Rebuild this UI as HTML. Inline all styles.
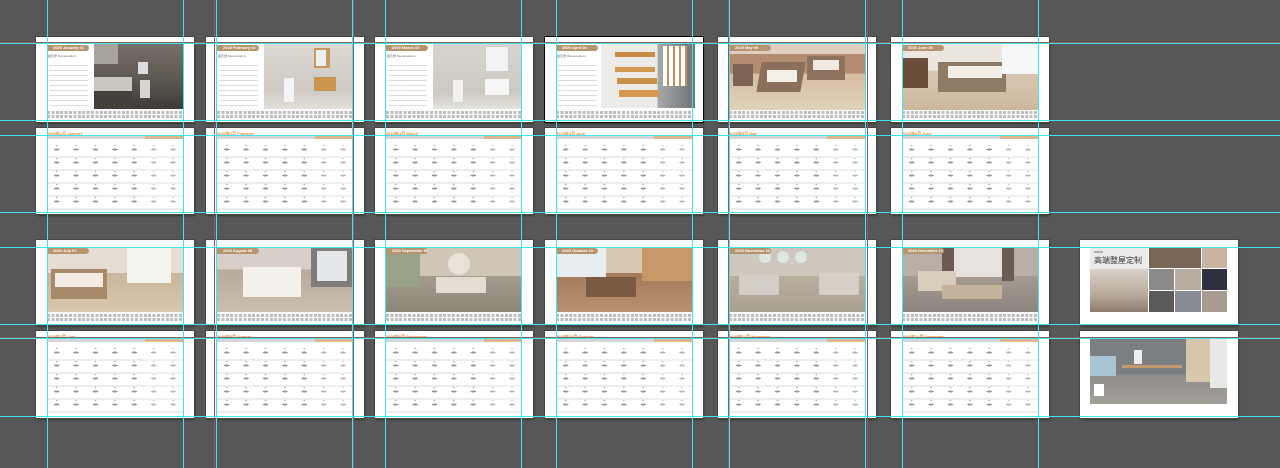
<!DOCTYPE html>
<html><head><meta charset="utf-8"><style>
*{margin:0;padding:0;box-sizing:border-box}
html,body{width:1280px;height:468px;overflow:hidden;background:#575757;font-family:"Liberation Sans","Noto Sans CJK SC",sans-serif}
.card{position:absolute;background:#fff;width:158px;box-shadow:0 0 0 1px #444,1px 2px 2px rgba(0,0,0,.35)}
.ab{position:absolute}
.pill{position:absolute;left:11px;top:8px;width:42px;height:6px;background:#b8946e;border-radius:0 3px 3px 0;color:#fff;font-size:4px;line-height:6px;padding-left:6px;font-weight:bold;white-space:nowrap}
.strip{position:absolute;left:11px;top:74px;width:136px;height:7px;background:repeating-linear-gradient(90deg,#a8a8a8 0 3px,#fff 3px 4.4px);opacity:.75}
.strip:after{content:"";position:absolute;left:0;top:3px;width:100%;height:1px;background:#fff}
.lines{position:absolute;left:13px;top:24px;width:39px;height:46px;background:repeating-linear-gradient(180deg,#fff 0 4px,#ddd 4px 5px)}
.memo{position:absolute;left:12px;top:17px;font-size:3px;color:#666;white-space:nowrap}
.ctitle{position:absolute;left:11px;top:3px;font-size:4px;color:#e08a3a;white-space:nowrap;font-weight:bold}
.chead{position:absolute;left:11px;top:8px;width:136px;height:3px;background:linear-gradient(90deg,#d4d6d8 0 72%,#dbb68e 72%)}
.crows{position:absolute;left:11px;top:17px;width:136px;height:68px;background:repeating-linear-gradient(180deg,transparent 0 11px,#ececec 11px 13px)}
.cells{position:absolute;left:11px;top:14px;width:136px;height:65px;
background-image:radial-gradient(ellipse 1px 0.8px,#aaa 90%,transparent 100%),radial-gradient(ellipse 3px 1px,#999 90%,transparent 100%);
background-size:19.4px 13px,19.4px 13px;background-position:0 -3px,0 1px}
.cells:after{content:"";position:absolute;left:97px;top:0;width:39px;height:100%;background:rgba(255,200,140,.35);mix-blend-mode:screen}
.photo{position:absolute}
.vg{position:absolute;top:0;width:1px;height:468px;background:#3fe4ec}
.hg{position:absolute;left:0;height:1px;width:1280px;background:#3fe4ec}
.vp{position:absolute;top:0;width:1px;height:468px;background:#8a5e5e}
.hp{position:absolute;left:0;height:1px;width:1280px;background:#8a5e5e}
</style></head><body>

<!-- ROW 1 -->
<div class="card" style="left:36px;top:37px;height:85px">
 <div class="pill">2020 January 01</div><div class="memo">备忘录 Memorandum</div><div class="lines"></div>
 <div class="photo" style="left:58px;top:7px;width:89px;height:65px;background:linear-gradient(180deg,#777068 0%,#5c5750 55%,#3e3b38 100%)">
  <div class="ab" style="left:0;top:33px;width:38px;height:14px;background:#c9c5bf"></div>
  <div class="ab" style="left:0;top:0;width:24px;height:20px;background:#a8a39b"></div>
  <div class="ab" style="left:44px;top:18px;width:10px;height:12px;background:#ddd"></div>
  <div class="ab" style="left:46px;top:36px;width:10px;height:18px;background:#d8d5d0"></div>
  <div class="ab" style="left:0;top:47px;width:38px;height:18px;background:#44403c"></div>
 </div>
 <div class="strip"></div>
</div>
<div class="card" style="left:206px;top:37px;height:85px">
 <div class="pill">2020 February 02</div><div class="memo">备忘录 Memorandum</div><div class="lines"></div>
 <div class="photo" style="left:58px;top:7px;width:89px;height:65px;background:linear-gradient(180deg,#dcd8d2,#cfcac3 70%,#e2dfdb)">
  <div class="ab" style="left:50px;top:4px;width:16px;height:20px;background:#c49a62"></div>
  <div class="ab" style="left:52px;top:6px;width:10px;height:16px;background:#eceff0"></div>
  <div class="ab" style="left:50px;top:33px;width:22px;height:14px;background:#c9954e"></div>
  <div class="ab" style="left:20px;top:34px;width:10px;height:24px;background:#f4f4f4"></div>
 </div>
 <div class="strip"></div>
</div>
<div class="card" style="left:375px;top:37px;height:85px">
 <div class="pill">2020 March 03</div><div class="memo">备忘录 Memorandum</div><div class="lines"></div>
 <div class="photo" style="left:58px;top:7px;width:89px;height:65px;background:linear-gradient(180deg,#d8d3cd,#cec9c2 75%,#e4e2df)">
  <div class="ab" style="left:52px;top:2px;width:24px;height:26px;background:#f3f3f3;border:1px solid #ccc"></div>
  <div class="ab" style="left:52px;top:35px;width:24px;height:16px;background:#f6f6f6"></div>
  <div class="ab" style="left:20px;top:36px;width:10px;height:22px;background:#f2f2f2"></div>
 </div>
 <div class="strip"></div>
</div>
<div class="card" style="left:545px;top:37px;height:85px;box-shadow:0 0 0 1px #000,1px 2px 2px rgba(0,0,0,.4)">
 <div class="pill">2020 April 04</div><div class="memo">备忘录 Memorandum</div><div class="lines"></div>
 <div class="photo" style="left:56px;top:5px;width:94px;height:66px;background:linear-gradient(90deg,#ecebe8 0 60%,#a8a9ab 60%,#6f7276)">
  <div class="ab" style="left:14px;top:10px;width:40px;height:5px;background:#c88c44"></div>
  <div class="ab" style="left:14px;top:25px;width:40px;height:5px;background:#d09850"></div>
  <div class="ab" style="left:16px;top:36px;width:40px;height:6px;background:#c99048"></div>
  <div class="ab" style="left:18px;top:48px;width:40px;height:7px;background:#d39a50"></div>
  <div class="ab" style="left:62px;top:4px;width:24px;height:40px;background:repeating-linear-gradient(90deg,#fff 0 4px,#c09060 4px 6px)"></div>
 </div>
 <div class="strip"></div>
</div>
<div class="card" style="left:718px;top:37px;height:85px">
 <div class="photo" style="left:11px;top:7px;width:136px;height:66px;background:linear-gradient(180deg,#e0cfc0 0 15%,#b48d70 15% 45%,#d4bea2 45%,#e2d2bb)">
  <div class="ab" style="left:30px;top:18px;width:44px;height:30px;background:#8b6f5a;transform:skewX(-10deg)"></div>
  <div class="ab" style="left:38px;top:26px;width:30px;height:12px;background:#f4efe9"></div>
  <div class="ab" style="left:78px;top:12px;width:38px;height:24px;background:#8d7260"></div>
  <div class="ab" style="left:84px;top:16px;width:26px;height:10px;background:#f0eae2"></div>
  <div class="ab" style="left:4px;top:20px;width:20px;height:22px;background:#7c6454"></div>
 </div>
 <div class="pill">2020 May 05</div>
 <div class="strip"></div>
</div>
<div class="card" style="left:891px;top:37px;height:85px">
 <div class="photo" style="left:11px;top:7px;width:136px;height:66px;background:linear-gradient(180deg,#ece6e0 0 40%,#d8c8b4 40%,#cdb89c)">
  <div class="ab" style="left:0;top:14px;width:26px;height:30px;background:#6a4e3a"></div>
  <div class="ab" style="left:36px;top:18px;width:68px;height:30px;background:#8f7a66"></div>
  <div class="ab" style="left:46px;top:22px;width:54px;height:12px;background:#f3efe9"></div>
  <div class="ab" style="left:100px;top:0;width:36px;height:30px;background:#f6f7f8"></div>
 </div>
 <div class="pill">2020 June 06</div>
 <div class="strip"></div>
</div>

<!-- ROW 2 calendars -->
<div class="card" style="left:36px;top:128px;height:86px"><div class="ctitle">2020年1月 January</div><div class="chead"></div><div class="crows"></div><div class="cells"></div></div>
<div class="card" style="left:206px;top:128px;height:86px"><div class="ctitle">2020年2月 February</div><div class="chead"></div><div class="crows"></div><div class="cells"></div></div>
<div class="card" style="left:375px;top:128px;height:86px"><div class="ctitle">2020年3月 March</div><div class="chead"></div><div class="crows"></div><div class="cells"></div></div>
<div class="card" style="left:545px;top:128px;height:86px"><div class="ctitle">2020年4月 April</div><div class="chead"></div><div class="crows"></div><div class="cells"></div></div>
<div class="card" style="left:718px;top:128px;height:86px"><div class="ctitle">2020年5月 May</div><div class="chead"></div><div class="crows"></div><div class="cells"></div></div>
<div class="card" style="left:891px;top:128px;height:86px"><div class="ctitle">2020年6月 June</div><div class="chead"></div><div class="crows"></div><div class="cells"></div></div>

<!-- ROW 3 -->
<div class="card" style="left:36px;top:240px;height:85px">
 <div class="photo" style="left:11px;top:7px;width:136px;height:65px;background:linear-gradient(180deg,#e6ddd2 0 40%,#c9b69c 40%,#d8c7ae)">
  <div class="ab" style="left:4px;top:22px;width:56px;height:30px;background:#a88a6a"></div>
  <div class="ab" style="left:8px;top:26px;width:48px;height:14px;background:#f2ece4"></div>
  <div class="ab" style="left:80px;top:0;width:44px;height:36px;background:#f4f2ee"></div>
 </div>
 <div class="pill">2020 July 07</div><div class="strip"></div>
</div>
<div class="card" style="left:206px;top:240px;height:85px">
 <div class="photo" style="left:11px;top:7px;width:136px;height:65px;background:linear-gradient(180deg,#d8d0c8 0 35%,#b7aa9c 35%,#cbbfb2)">
  <div class="ab" style="left:26px;top:20px;width:58px;height:30px;background:#f4f1ed"></div>
  <div class="ab" style="left:94px;top:0;width:42px;height:40px;background:#7f7d7a"></div>
  <div class="ab" style="left:100px;top:4px;width:30px;height:30px;background:#e5e8ea"></div>
 </div>
 <div class="pill">2020 August 08</div><div class="strip"></div>
</div>
<div class="card" style="left:375px;top:240px;height:85px">
 <div class="photo" style="left:11px;top:7px;width:136px;height:65px;background:linear-gradient(180deg,#cfc6b8 0 45%,#a49c8e 45%,#8c8678)">
  <div class="ab" style="left:0;top:0;width:34px;height:40px;background:#9aa38a"></div>
  <div class="ab" style="left:50px;top:30px;width:50px;height:16px;background:#e4ddd2"></div>
  <div class="ab" style="left:62px;top:6px;width:22px;height:22px;border-radius:50%;background:#e8e2d8"></div>
 </div>
 <div class="pill">2020 September 09</div><div class="strip"></div>
</div>
<div class="card" style="left:545px;top:240px;height:85px">
 <div class="photo" style="left:11px;top:7px;width:136px;height:65px;background:linear-gradient(180deg,#d9c9b4 0 40%,#a47a58 40%,#b89272)">
  <div class="ab" style="left:0;top:0;width:50px;height:30px;background:#e8eef0"></div>
  <div class="ab" style="left:86px;top:0;width:50px;height:34px;background:#c89868"></div>
  <div class="ab" style="left:30px;top:30px;width:50px;height:20px;background:#7a5a42"></div>
 </div>
 <div class="pill">2020 October 10</div><div class="strip"></div>
</div>
<div class="card" style="left:718px;top:240px;height:85px">
 <div class="photo" style="left:11px;top:7px;width:136px;height:65px;background:linear-gradient(180deg,#cdc7bd 0 45%,#b8ae9e 45%,#a8a092)">
  <div class="ab" style="left:30px;top:4px;width:12px;height:12px;border-radius:50%;background:#dfe8e0"></div>
  <div class="ab" style="left:48px;top:4px;width:12px;height:12px;border-radius:50%;background:#dfe8e0"></div>
  <div class="ab" style="left:66px;top:4px;width:12px;height:12px;border-radius:50%;background:#dfe8e0"></div>
  <div class="ab" style="left:10px;top:28px;width:40px;height:20px;background:#d4cfc6"></div>
  <div class="ab" style="left:90px;top:26px;width:40px;height:22px;background:#d6d0c6"></div>
 </div>
 <div class="pill">2020 November 11</div><div class="strip"></div>
</div>
<div class="card" style="left:891px;top:240px;height:85px">
 <div class="photo" style="left:11px;top:7px;width:136px;height:65px;background:linear-gradient(180deg,#b8aea6 0 45%,#a59b92 45%,#8c857e)">
  <div class="ab" style="left:50px;top:0;width:50px;height:30px;background:#e6e3de"></div>
  <div class="ab" style="left:40px;top:0;width:12px;height:34px;background:#6a5c54"></div>
  <div class="ab" style="left:100px;top:0;width:12px;height:34px;background:#6a5c54"></div>
  <div class="ab" style="left:16px;top:24px;width:38px;height:20px;background:#d8cdbd"></div>
  <div class="ab" style="left:40px;top:38px;width:60px;height:14px;background:#c4b49e"></div>
 </div>
 <div class="pill">2020 December 12</div><div class="strip"></div>
</div>
<div class="card" style="left:1080px;top:240px;height:85px">
 <div class="ab" style="left:10px;top:7px;width:58px;height:22px;background:#ebebeb">
  <div class="ab" style="left:4px;top:3px;font-size:3px;color:#333">SINUA</div>
  <div class="ab" style="left:4px;top:9px;font-size:8px;line-height:9px;color:#333;white-space:nowrap">高端整屋定制</div>
 </div>
 <div class="ab" style="left:10px;top:29px;width:58px;height:43px;background:linear-gradient(180deg,#d8d2ca,#b8aa9a 60%,#8c7c6e)"></div>
 <div class="ab" style="left:69px;top:7px;width:52px;height:21px;background:#7a6656"></div>
 <div class="ab" style="left:122px;top:7px;width:25px;height:21px;background:#c8b4a0"></div>
 <div class="ab" style="left:69px;top:29px;width:25px;height:21px;background:#8a8a88"></div>
 <div class="ab" style="left:95px;top:29px;width:26px;height:21px;background:#b8aca0"></div>
 <div class="ab" style="left:122px;top:29px;width:25px;height:21px;background:#2e3040"></div>
 <div class="ab" style="left:69px;top:51px;width:25px;height:21px;background:#5c5a58"></div>
 <div class="ab" style="left:95px;top:51px;width:26px;height:21px;background:#888a94"></div>
 <div class="ab" style="left:122px;top:51px;width:25px;height:21px;background:#a89c90"></div>
</div>

<!-- ROW 4 calendars -->
<div class="card" style="left:36px;top:331px;height:87px"><div class="ctitle">2020年7月 July</div><div class="chead"></div><div class="crows"></div><div class="cells"></div></div>
<div class="card" style="left:206px;top:331px;height:87px"><div class="ctitle">2020年8月 August</div><div class="chead"></div><div class="crows"></div><div class="cells"></div></div>
<div class="card" style="left:375px;top:331px;height:87px"><div class="ctitle">2020年9月 September</div><div class="chead"></div><div class="crows"></div><div class="cells"></div></div>
<div class="card" style="left:545px;top:331px;height:87px"><div class="ctitle">2020年10月 October</div><div class="chead"></div><div class="crows"></div><div class="cells"></div></div>
<div class="card" style="left:718px;top:331px;height:87px"><div class="ctitle">2020年11月 November</div><div class="chead"></div><div class="crows"></div><div class="cells"></div></div>
<div class="card" style="left:891px;top:331px;height:87px"><div class="ctitle">2020年12月 December</div><div class="chead"></div><div class="crows"></div><div class="cells"></div></div>
<div class="card" style="left:1080px;top:331px;height:87px">
 <div class="ab" style="left:10px;top:7px;width:137px;height:66px;background:linear-gradient(180deg,#7c7f82 0 55%,#8e8c88 55%,#a4a19c)">
  <div class="ab" style="left:0;top:18px;width:26px;height:20px;background:#a9c4d2"></div>
  <div class="ab" style="left:32px;top:27px;width:60px;height:3px;background:#c49a70"></div>
  <div class="ab" style="left:44px;top:12px;width:8px;height:14px;background:#eee"></div>
  <div class="ab" style="left:96px;top:0;width:24px;height:44px;background:#d8c6ac"></div>
  <div class="ab" style="left:120px;top:0;width:17px;height:50px;background:#e8e8e6"></div>
  <div class="ab" style="left:4px;top:46px;width:10px;height:12px;background:#fff"></div>
 </div>
</div>

<!-- guides -->
<div class="hp" style="top:42px"></div><div class="hp" style="top:337px"></div>
<div class="vp" style="left:214px"></div><div class="vp" style="left:353px"></div><div class="vp" style="left:728px"></div><div class="vp" style="left:867px"></div>
<div class="vg" style="left:47px"></div><div class="vg" style="left:183px"></div>
<div class="vg" style="left:216px"></div><div class="vg" style="left:352px"></div>
<div class="vg" style="left:385px"></div><div class="vg" style="left:521px"></div>
<div class="vg" style="left:556px"></div><div class="vg" style="left:692px"></div>
<div class="vg" style="left:729px"></div><div class="vg" style="left:865px"></div>
<div class="vg" style="left:902px"></div><div class="vg" style="left:1038px"></div>
<div class="hg" style="top:43px"></div><div class="hg" style="top:120px"></div>
<div class="hg" style="top:135px"></div><div class="hg" style="top:212px"></div>
<div class="hg" style="top:247px"></div><div class="hg" style="top:324px"></div>
<div class="hg" style="top:338px"></div><div class="hg" style="top:416px"></div>
</body></html>
